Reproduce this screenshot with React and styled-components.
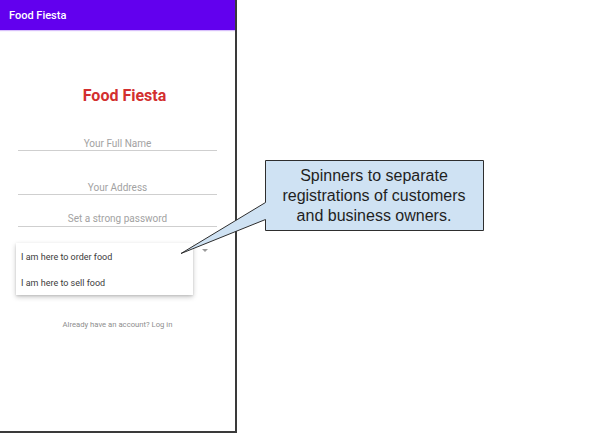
import styled, { createGlobalStyle } from "styled-components";

const GlobalStyle = createGlobalStyle`
  html, body {
    margin: 0;
    padding: 0;
    background: #ffffff;
  }
  body {
    font-family: Roboto, "Liberation Sans", sans-serif;
  }
`;

const Page = styled.div`
  position: relative;
  width: 601px;
  height: 433px;
  display: flex;
  overflow: hidden;
  background: #ffffff;
`;

const Phone = styled.div`
  position: relative;
  width: 237px;
  height: 433px;
  box-sizing: border-box;
  border-right: 2px solid #3a3a3a;
  border-bottom: 2px solid #3a3a3a;
  display: flex;
  flex-direction: column;
  background: #ffffff;
`;

const AppBar = styled.div`
  height: 30px;
  flex-shrink: 0;
  background: #6200ee;
  color: #ffffff;
  font-family: Roboto, sans-serif;
  font-weight: 500;
  font-size: 11px;
  display: flex;
  align-items: center;
  padding-left: 9px;
  box-shadow: 0 1px 1px rgba(98, 0, 238, 0.25);
`;

const Form = styled.div`
  position: relative;
  display: flex;
  flex-direction: column;
  padding: 0 18px;
`;

const Title = styled.div`
  margin-top: 56px;
  padding-left: 14px;
  text-align: center;
  font-family: Roboto, sans-serif;
  font-weight: 700;
  font-size: 16px;
  line-height: 20px;
  color: #d32f2f;
`;

const Field = styled.div`
  margin-top: ${(p) => p.$gap}px;
  padding-bottom: ${(p) => p.$pad}px;
  border-bottom: 1px solid #cfcfcf;
  text-align: center;
  font-family: Roboto, sans-serif;
  font-size: 10px;
  line-height: 12px;
  color: #a2a2a2;
`;

const SpinnerRow = styled.div`
  position: relative;
  margin-top: 13px;
  height: 20px;
  display: flex;
  align-items: center;
  justify-content: flex-end;
`;

const Arrow = styled.div`
  width: 0;
  height: 0;
  margin-right: 9px;
  border-left: 3px solid transparent;
  border-right: 3px solid transparent;
  border-top: 3px solid #9a9a9a;
`;

const Menu = styled.div`
  position: absolute;
  left: 16px;
  top: 243px;
  width: 177px;
  background: #ffffff;
  box-shadow: 0 2px 5px rgba(0, 0, 0, 0.22), 0 1px 2px rgba(0, 0, 0, 0.1);
  display: flex;
  flex-direction: column;
`;

const MenuItem = styled.div`
  height: 26px;
  display: flex;
  align-items: center;
  padding-left: 5px;
  padding-top: 1px;
  box-sizing: border-box;
  font-family: Roboto, sans-serif;
  font-size: 9px;
  color: #3c3c3c;
`;

const LoginLink = styled.div`
  margin-top: 60px;
  text-align: center;
  font-family: Roboto, sans-serif;
  font-size: 7.7px;
  line-height: 10px;
  color: #8e8e8e;
`;

const Callout = styled.div`
  position: absolute;
  left: 0;
  top: 0;
  width: 601px;
  height: 433px;
  pointer-events: none;
`;

const CalloutText = styled.div`
  position: absolute;
  left: 265px;
  top: 166px;
  width: 218px;
  text-align: center;
  font-family: "Liberation Sans", Arial, sans-serif;
  font-size: 16px;
  line-height: 20px;
  color: #1f1f1f;
`;

export default function App() {
  return (
    <>
      <GlobalStyle />
      <Page>
        <Phone>
          <AppBar>Food Fiesta</AppBar>
          <Form>
            <Title>Food Fiesta</Title>
            <Field $gap={32} $pad={0}>Your Full Name</Field>
            <Field $gap={31} $pad={0}>Your Address</Field>
            <Field $gap={18} $pad={1}>Set a strong password</Field>
            <SpinnerRow>
              <Arrow />
            </SpinnerRow>
            <LoginLink>Already have an account? Log in</LoginLink>
          </Form>
          <Menu>
            <MenuItem>I am here to order food</MenuItem>
            <MenuItem>I am here to sell food</MenuItem>
          </Menu>
        </Phone>
        <Callout>
          <svg width="601" height="433" style={{ position: "absolute", left: 0, top: 0 }}>
            <polygon
              points="265.5,160.5 483.5,160.5 483.5,230.5 265.5,230.5 265.5,219.5 181,253.5 265.5,202.5"
              fill="#cfe2f3"
              stroke="#2e2e2e"
              strokeWidth="1"
            />
          </svg>
          <CalloutText>
            Spinners to separate
            <br />
            registrations of customers
            <br />
            and business owners.
          </CalloutText>
        </Callout>
      </Page>
    </>
  );
}
